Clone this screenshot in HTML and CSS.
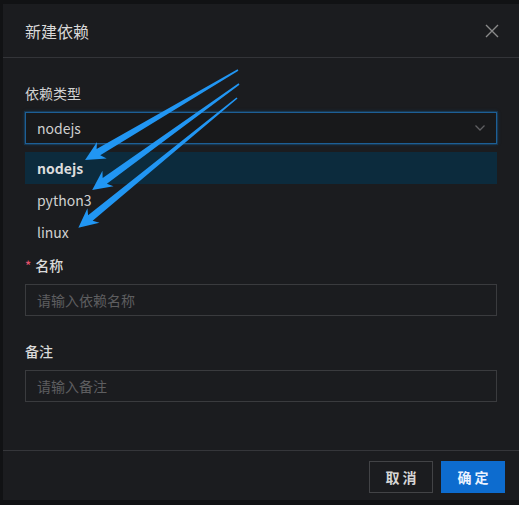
FILE: index.html
```html
<!DOCTYPE html>
<html lang="zh-CN">
<head>
<meta charset="utf-8">
<title>新建依赖</title>
<link rel="stylesheet" href="styles.css">
</head>
<body>
<div class="modal">
  <div class="modal-header">
    <div class="modal-title">新建依赖</div>
    <svg class="close" width="14" height="14" viewBox="0 0 14 14"><path d="M1 1 L13 13 M13 1 L1 13" stroke="#8a8a8a" stroke-width="1.4" fill="none"/></svg>
  </div>
  <div class="modal-body">
    <div class="label">依赖类型</div>
    <div class="select">
      <span class="select-value">nodejs</span>
      <svg class="chevron" width="12" height="8" viewBox="0 0 12 8"><path d="M1.5 1.5 L6 6 L10.5 1.5" stroke="#5f5f62" stroke-width="1.3" fill="none"/></svg>
    </div>
    <div class="dropdown">
      <div class="option active">nodejs</div>
      <div class="option">python3</div>
      <div class="option">linux</div>
    </div>
    <div class="label label-name"><span class="req">*</span>名称</div>
    <div class="input placeholder">请输入依赖名称</div>
    <div class="label label-remark">备注</div>
    <div class="input placeholder">请输入备注</div>
  </div>
  <div class="modal-footer">
    <button class="btn btn-default">取 消</button>
    <button class="btn btn-primary">确 定</button>
  </div>
</div>
<svg class="arrows" width="519" height="505" viewBox="0 0 519 505">
  <g fill="#2196f3">
    <g transform="translate(238 70) rotate(149.5)">
      <polygon points="0,-0.8 162,-3.6 158,-9.5 177.5,0 158,9.5 162,3.6 0,0.8"/>
    </g>
    <g transform="translate(239 84) rotate(144.2)">
      <polygon points="0,-0.8 165.5,-3.6 161.5,-9.5 181,0 161.5,9.5 165.5,3.6 0,0.8"/>
    </g>
    <g transform="translate(237 98) rotate(140.7)">
      <polygon points="0,-0.8 189.5,-3.6 185.5,-9.5 205,0 185.5,9.5 189.5,3.6 0,0.8"/>
    </g>
  </g>
</svg>
</body>
</html>
```

FILE: styles.css
```css
* { box-sizing: border-box; }
html, body {
  margin: 0;
  padding: 0;
  background: #111214;
  width: 519px;
  height: 505px;
  overflow: hidden;
  font-family: "Noto Sans CJK SC", "Noto Sans", sans-serif;
  font-size: 14px;
  color: #d0d0d0;
}
body { position: relative; }
.modal {
  margin: 4px 0 0 3px;
  width: 516px;
  height: 496px;
  background: #1b1c1f;
  display: flex;
  flex-direction: column;
}
.modal-header {
  height: 54px;
  padding: 0 20px 0 22px;
  border-bottom: 1px solid #333438;
  display: flex;
  align-items: center;
  justify-content: space-between;
}
.modal-title {
  font-size: 16px;
  color: #d9d9d9;
  line-height: 22px;
}
.modal-body {
  padding: 24px 22px 0 22px;
  flex: 1;
}
.label {
  line-height: 22px;
  height: 22px;
  margin-bottom: 8px;
  color: #d2d2d2;
  font-size: 14px;
}
.label-name, .label-remark { font-weight: 500; color: #dadada; }
.label-name { margin-top: 2px; }
.label-remark { margin-top: 24px; }
.req {
  color: #e0506a;
  margin-right: 4px;
  font-size: 13px;
}
.select {
  height: 32px;
  border: 1px solid #1d5f96;
  box-shadow: 0 0 0 1px rgba(24, 110, 180, 0.25), 0 0 4px rgba(24, 110, 180, 0.35);
  background: #18191b;
  display: flex;
  align-items: center;
  justify-content: space-between;
  padding: 0 10px 0 11px;
}
.select-value { color: #cfcfcf; line-height: 22px; }
.dropdown {
  margin-top: 4px;
  padding: 4px 0;
  background: #1b1c1f;
}
.option {
  height: 32px;
  line-height: 32px;
  padding: 0 12px;
  color: #d0d0d0;
}
.option.active {
  background: #0c2b3d;
  font-weight: 700;
  color: #dcdcdc;
}
.input {
  height: 32px;
  border: 1px solid #3a3b3e;
  padding: 0 11px;
  display: flex;
  align-items: center;
  background: #1b1c1f;
}
.placeholder { color: #5e5e60; }
.modal-footer {
  height: 50px;
  border-top: 1px solid #35363a;
  display: flex;
  justify-content: flex-end;
  align-items: flex-start;
  padding: 10px 14px 0 0;
  gap: 8px;
}
.btn {
  height: 32px;
  width: 64px;
  font-family: "Noto Sans CJK SC", sans-serif;
  font-size: 14px;
  font-weight: 700;
  cursor: pointer;
  padding: 0;
}
.btn-default {
  background: #1b1c1f;
  border: 1px solid #424346;
  color: #d6d6d6;
}
.btn-primary {
  background: #0d6ccf;
  border: 1px solid #0d6ccf;
  color: #eaf2ff;
}
.arrows {
  position: absolute;
  left: 0;
  top: 0;
  pointer-events: none;
}
```
